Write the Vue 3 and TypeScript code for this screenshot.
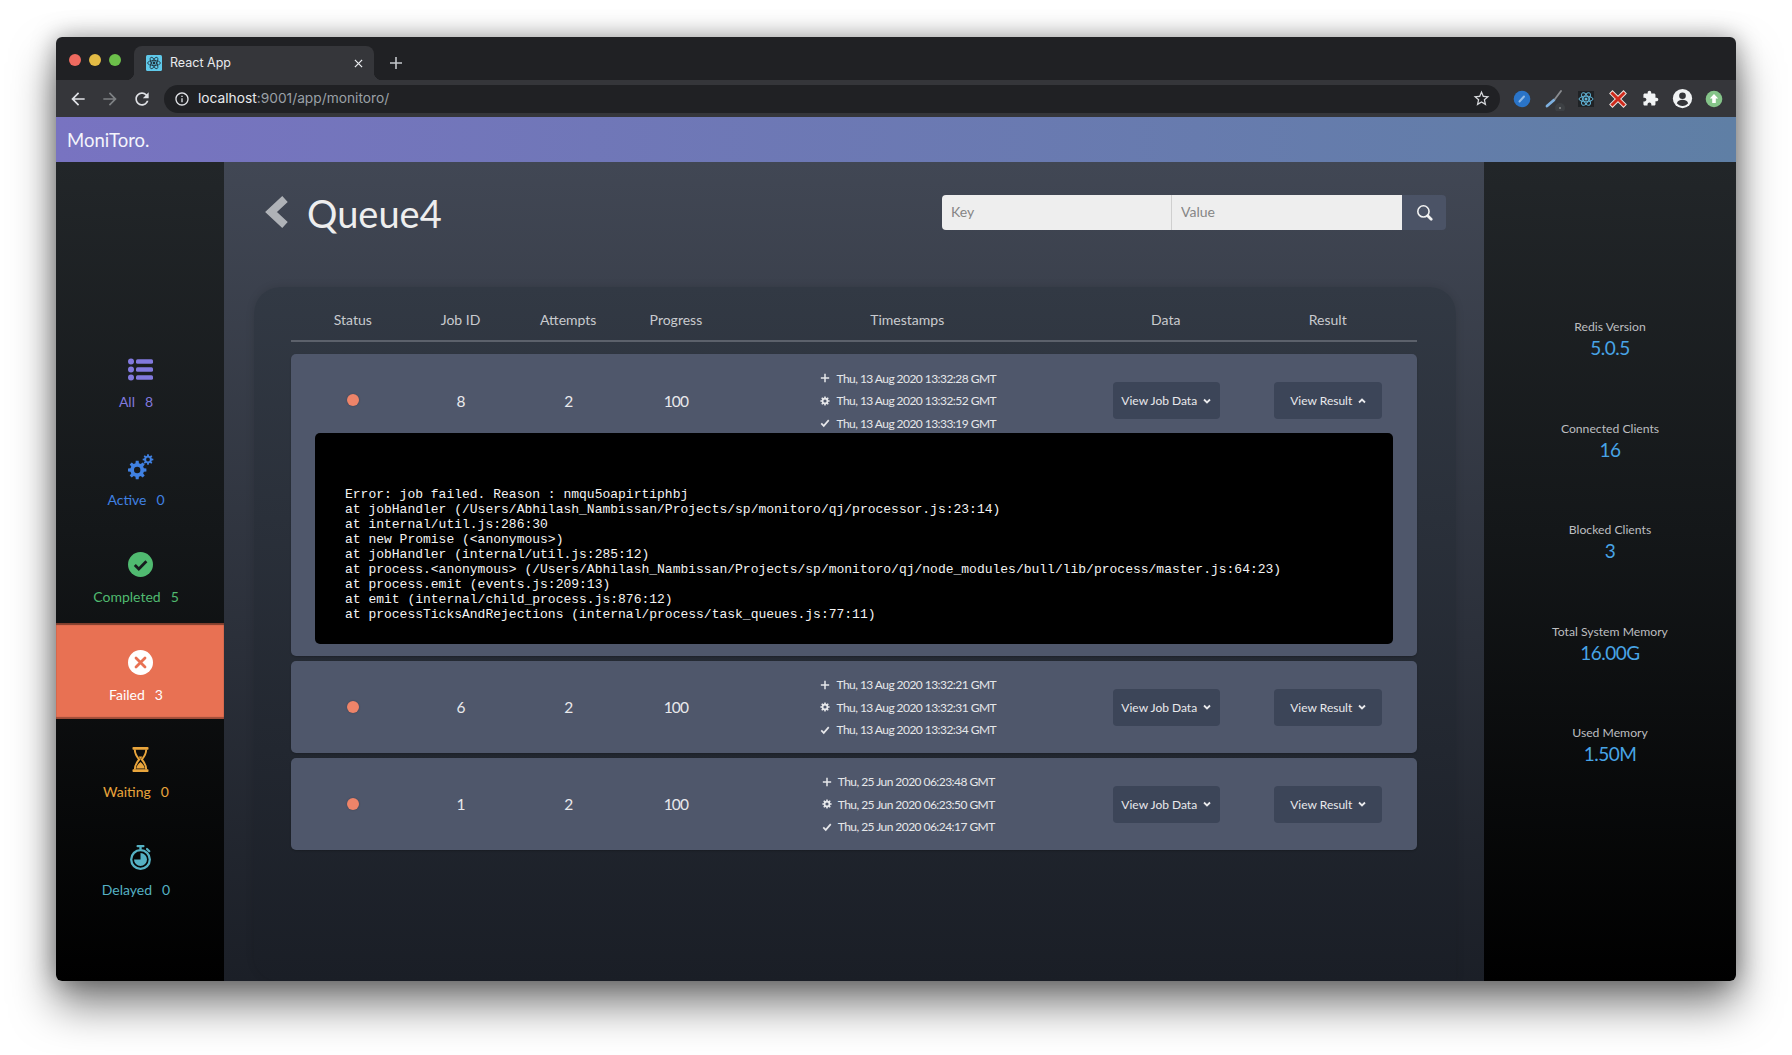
<script setup lang="ts">
interface NavItem { name: string; count: number; cls: string }
interface JobRow { id: number; stamps: string[]; open: boolean }

function gear(cx: number, cy: number, ro: number, ri: number, hole: number, n: number): string {
  const pts: string[] = []
  const step = (Math.PI * 2) / n
  for (let i = 0; i < n; i++) {
    const a = i * step
    const list: [number, number][] = [
      [ri, a - step * 0.32],
      [ro, a - step * 0.2],
      [ro, a + step * 0.2],
      [ri, a + step * 0.32],
    ]
    for (const [r, t] of list) {
      pts.push(`${(cx + r * Math.cos(t)).toFixed(2)} ${(cy + r * Math.sin(t)).toFixed(2)}`)
    }
  }
  const h = `M${cx - hole} ${cy}a${hole} ${hole} 0 1 0 ${hole * 2} 0a${hole} ${hole} 0 1 0 ${-hole * 2} 0z`
  return `M${pts.join('L')}z${h}`
}

const bigGear = gear(9.2, 15, 9.3, 6.9, 3.2, 8)
const smallGear = gear(20, 4.5, 5.4, 3.9, 1.9, 8)
const tinyGear = gear(6, 6, 5.6, 4.1, 1.9, 8)

const nav: NavItem[] = [
  { name: 'All', count: 8, cls: 'all' },
  { name: 'Active', count: 0, cls: 'active' },
  { name: 'Completed', count: 5, cls: 'completed' },
  { name: 'Failed', count: 3, cls: 'failed' },
  { name: 'Waiting', count: 0, cls: 'waiting' },
  { name: 'Delayed', count: 0, cls: 'delayed' },
]

const columns = ['Status', 'Job ID', 'Attempts', 'Progress', 'Timestamps', 'Data', 'Result']

const rows: JobRow[] = [
  { id: 8, open: true, stamps: ['Thu, 13 Aug 2020 13:32:28 GMT', 'Thu, 13 Aug 2020 13:32:52 GMT', 'Thu, 13 Aug 2020 13:33:19 GMT'] },
  { id: 6, open: false, stamps: ['Thu, 13 Aug 2020 13:32:21 GMT', 'Thu, 13 Aug 2020 13:32:31 GMT', 'Thu, 13 Aug 2020 13:32:34 GMT'] },
  { id: 1, open: false, stamps: ['Thu, 25 Jun 2020 06:23:48 GMT', 'Thu, 25 Jun 2020 06:23:50 GMT', 'Thu, 25 Jun 2020 06:24:17 GMT'] },
]

const trace = `Error: job failed. Reason : nmqu5oapirtiphbj
at jobHandler (/Users/Abhilash_Nambissan/Projects/sp/monitoro/qj/processor.js:23:14)
at internal/util.js:286:30
at new Promise (<anonymous>)
at jobHandler (internal/util.js:285:12)
at process.<anonymous> (/Users/Abhilash_Nambissan/Projects/sp/monitoro/qj/node_modules/bull/lib/process/master.js:64:23)
at process.emit (events.js:209:13)
at emit (internal/child_process.js:876:12)
at processTicksAndRejections (internal/process/task_queues.js:77:11)`

const stats = [
  { label: 'Redis Version', value: '5.0.5' },
  { label: 'Connected Clients', value: '16' },
  { label: 'Blocked Clients', value: '3' },
  { label: 'Total System Memory', value: '16.00G' },
  { label: 'Used Memory', value: '1.50M' },
]
</script>

<template>
  <div class="page">
    <div class="window">
      <div class="tabbar">
        <div class="lights">
          <span class="light red"></span>
          <span class="light yellow"></span>
          <span class="light green"></span>
        </div>
        <div class="tab">
          <svg class="favicon" viewBox="0 0 16 16">
            <rect width="16" height="16" rx="1.5" fill="#5fc9ea" />
            <g fill="none" stroke="#20303a" stroke-width="0.8">
              <ellipse cx="8" cy="8" rx="6.4" ry="2.5" />
              <ellipse cx="8" cy="8" rx="6.4" ry="2.5" transform="rotate(60 8 8)" />
              <ellipse cx="8" cy="8" rx="6.4" ry="2.5" transform="rotate(120 8 8)" />
            </g>
            <circle cx="8" cy="8" r="1.4" fill="#20303a" />
          </svg>
          <span class="tab-title">React App</span>
          <svg class="tab-close" viewBox="0 0 10 10">
            <path d="M1 1l8 8M9 1l-8 8" stroke="#e8eaed" stroke-width="1.4" fill="none" />
          </svg>
        </div>
        <svg class="new-tab" viewBox="0 0 14 14">
          <path d="M7 1v12M1 7h12" stroke="#c4c7cb" stroke-width="1.6" fill="none" />
        </svg>
      </div>

      <div class="toolbar">
        <span class="tool"><svg viewBox="0 0 24 24" fill="#dfe1e5"><path d="M20 11H7.83l5.59-5.59L12 4l-8 8 8 8 1.41-1.41L7.83 13H20v-2z" /></svg></span>
        <span class="tool"><svg viewBox="0 0 24 24" fill="#7d8083"><path d="M12 4l-1.41 1.41L16.17 11H4v2h12.17l-5.58 5.59L12 20l8-8z" /></svg></span>
        <span class="tool"><svg viewBox="0 0 24 24" fill="#dfe1e5"><path d="M17.65 6.35C16.2 4.9 14.21 4 12 4c-4.42 0-7.99 3.58-7.99 8s3.57 8 7.99 8c3.73 0 6.84-2.55 7.73-6h-2.08c-.82 2.33-3.04 4-5.65 4-3.31 0-6-2.69-6-6s2.69-6 6-6c1.66 0 3.14.69 4.22 1.78L13 11h7V4l-2.35 2.35z" /></svg></span>
        <div class="omnibox">
          <svg class="info" viewBox="0 0 24 24" fill="#e0e2e6"><path d="M11 7h2v2h-2zm0 4h2v6h-2zm1-9C6.48 2 2 6.48 2 12s4.48 10 10 10 10-4.48 10-10S17.52 2 12 2zm0 18c-4.41 0-8-3.59-8-8s3.59-8 8-8 8 3.59 8 8-3.59 8-8 8z" /></svg>
          <span class="url"><span class="host">localhost</span>:9001/app/monitoro/</span>
          <svg class="star" viewBox="0 0 24 24" fill="#d5d7da"><path d="M22 9.24l-7.19-.62L12 2 9.19 8.63 2 9.24l5.46 4.73L5.82 21 12 17.27 18.18 21l-1.63-7.03L22 9.24zM12 15.4l-3.76 2.27 1-4.28-3.32-2.88 4.38-.38L12 6.1l1.71 4.01 4.38.38-3.32 2.88 1 4.28L12 15.4z" /></svg>
        </div>
        <div class="exts">
          <span class="tool">
            <svg viewBox="0 0 24 24" class="ext">
              <circle cx="12" cy="12" r="8.3" fill="#2a74c8" />
              <path d="M9.500 14.500l4.500-5" stroke="#8fb9e6" stroke-width="2" stroke-linecap="round" />
            </svg>
          </span>
          <span class="tool">
            <svg viewBox="0 0 24 24" class="ext">
              <path d="M5 19l7-6" stroke="#7db0e0" stroke-width="2.800" stroke-linecap="round" />
              <path d="M13 12l6-8" stroke="#8a8c90" stroke-width="1.800" stroke-linecap="round" />
              <circle cx="18" cy="21" r="5" fill="#3d4044" />
              <circle cx="18" cy="21" r="0.700" fill="#e0e0e0" />
            </svg>
          </span>
          <span class="tool">
            <svg viewBox="0 0 24 24" class="ext">
              <rect x="4" y="4" width="16" height="16" fill="#1f2225" />
              <g fill="none" stroke="#62b4d6" stroke-width="1">
                <ellipse cx="12" cy="12" rx="7" ry="2.800" />
                <ellipse cx="12" cy="12" rx="7" ry="2.800" transform="rotate(60 12 12)" />
                <ellipse cx="12" cy="12" rx="7" ry="2.800" transform="rotate(120 12 12)" />
              </g>
              <circle cx="12" cy="12" r="1.500" fill="#62b4d6" />
            </svg>
          </span>
          <span class="tool">
            <svg viewBox="0 0 24 24" class="ext">
              <path d="M6.500 6.500l11 11M17.500 6.500l-11 11" stroke="#f0e6e2" stroke-width="4.800" stroke-linecap="square" />
              <path d="M6.500 6.500l11 11M17.500 6.500l-11 11" stroke="#cf2a1c" stroke-width="3" stroke-linecap="square" />
            </svg>
          </span>
          <span class="tool">
            <svg viewBox="0 0 24 24" class="puzzle" fill="#f1f3f4"><path d="M20.500 11H19V7c0-1.100-.9-2-2-2h-4V3.500C13 2.120 11.880 1 10.500 1S8 2.120 8 3.500V5H4c-1.100 0-1.990.9-1.990 2v3.800H3.500c1.490 0 2.700 1.210 2.700 2.700s-1.210 2.700-2.700 2.700H2V20c0 1.100.9 2 2 2h3.800v-1.500c0-1.490 1.210-2.700 2.700-2.700 1.490 0 2.700 1.210 2.700 2.700V22H17c1.100 0 2-.9 2-2v-4h1.500c1.380 0 2.500-1.120 2.500-2.500S21.880 11 20.500 11z" /></svg>
          </span>
          <span class="tool">
            <svg viewBox="0 0 24 24" class="avatar">
              <circle cx="12" cy="12" r="11" fill="#f1f3f4" />
              <circle cx="12" cy="8.800" r="3.800" fill="#35363a" />
              <path d="M5.500 17.500c1-3 4-4 6.500-4s5.500 1 6.500 4c-1.500 1.900-3.800 3-6.500 3s-5-1.100-6.500-3z" fill="#35363a" />
            </svg>
          </span>
          <span class="tool">
            <svg viewBox="0 0 24 24" class="ext">
              <circle cx="12" cy="12" r="8.300" fill="#85c489" />
              <path d="M12 7l4.200 4.500h-2.400V16h-3.600v-4.500H7.800z" fill="#fff" />
            </svg>
          </span>
        </div>
      </div>

      <header class="brandbar">MoniToro.</header>

      <div class="app">
        <nav class="sidebar">
          <div v-for="item in nav" :key="item.name" class="nav-item" :class="item.cls">
            <svg v-if="item.cls === 'all'" class="nav-icon" viewBox="0 0 25 25">
              <circle cx="3" cy="4.500" r="3" />
              <circle cx="3" cy="12.500" r="3" />
              <circle cx="3" cy="20.500" r="3" />
              <rect x="8" y="2.300" width="17" height="4.400" rx="1.500" />
              <rect x="8" y="10.300" width="17" height="4.400" rx="1.500" />
              <rect x="8" y="18.300" width="17" height="4.400" rx="1.500" />
            </svg>
            <svg v-else-if="item.cls === 'active'" class="nav-icon" viewBox="0 0 25 25" fill-rule="evenodd">
              <path :d="bigGear" />
              <path :d="smallGear" />
            </svg>
            <svg v-else-if="item.cls === 'completed'" class="nav-icon" viewBox="0 0 25 25">
              <circle cx="12.500" cy="12.500" r="12.500" />
              <path d="M6.800 13l4 4 7.600-7.800" fill="none" stroke="#171b1e" stroke-width="2.800" />
            </svg>
            <svg v-else-if="item.cls === 'failed'" class="nav-icon" viewBox="0 0 25 25">
              <circle cx="12.500" cy="12.500" r="12.500" fill="#fff" />
              <path d="M8 8l9 9M17 8l-9 9" fill="none" stroke="#e87153" stroke-width="2.800" stroke-linecap="round" />
            </svg>
            <svg v-else-if="item.cls === 'waiting'" class="nav-icon" viewBox="0 0 25 25">
              <rect x="4.500" y="0" width="16" height="2.800" rx="0.800" />
              <rect x="4.500" y="22.200" width="16" height="2.800" rx="0.800" />
              <path d="M6.800 2.500c0 5 2.200 7.500 4.400 10-2.200 2.500-4.400 5-4.400 10M18.200 2.500c0 5-2.200 7.500-4.400 10 2.200 2.500 4.400 5 4.400 10" fill="none" stroke="currentColor" stroke-width="1.900" />
              <path d="M10.500 9.500h4L12.500 12zM8.200 21.500c.3-3 2.500-5 4.300-6.500 1.800 1.500 4 3.500 4.300 6.500z" />
            </svg>
            <svg v-else class="nav-icon" viewBox="0 0 25 25">
              <rect x="8.500" y="0" width="8" height="2.200" rx="1" />
              <rect x="11.300" y="1.500" width="2.400" height="3" />
              <path d="M19 4l2.300 2.200" stroke="currentColor" stroke-width="2.200" stroke-linecap="round" />
              <circle cx="12.500" cy="14.500" r="9.300" fill="none" stroke="currentColor" stroke-width="2.300" />
              <path d="M12.500 14.500V8a6.500 6.500 0 1 1-6.500 6.500z" />
            </svg>
            <div class="nav-label"><span>{{ item.name }}</span><span>{{ item.count }}</span></div>
          </div>
        </nav>

        <main class="main">
          <div class="titlebar">
            <div class="title-wrap">
              <svg class="back" viewBox="0 0 24 32">
                <path d="M20 3L6 16l14 13" fill="none" stroke="#afb2b7" stroke-width="8" />
              </svg>
              <h1 class="title">Queue4</h1>
            </div>
            <div class="search">
              <input class="field" placeholder="Key" />
              <input class="field" placeholder="Value" />
              <button class="search-btn" aria-label="Search">
                <svg viewBox="0 0 16 16">
                  <circle cx="7" cy="7" r="5.300" fill="none" stroke="#f2f2f2" stroke-width="1.500" />
                  <path d="M11 11l3.300 3.300" stroke="#f2f2f2" stroke-width="2.600" stroke-linecap="round" />
                </svg>
              </button>
            </div>
          </div>

          <section class="card">
            <div class="grid head">
              <div v-for="c in columns" :key="c" class="cell">{{ c }}</div>
            </div>
            <div class="rows">
              <article v-for="r in rows" :key="r.id" class="row" :class="{ open: r.open }">
                <div class="grid body">
                  <div class="cell"><span class="dot"></span></div>
                  <div class="cell num">{{ r.id }}</div>
                  <div class="cell num">2</div>
                  <div class="cell num">100</div>
                  <div class="cell stamps">
                    <div class="stamp">
                      <svg class="stamp-icon" viewBox="0 0 12 12"><path d="M6 1v10M1 6h10" stroke="currentColor" stroke-width="1.800" fill="none" /></svg>
                      <span>{{ r.stamps[0] }}</span>
                    </div>
                    <div class="stamp">
                      <svg class="stamp-icon" viewBox="0 0 12 12" fill-rule="evenodd"><path :d="tinyGear" fill="currentColor" /></svg>
                      <span>{{ r.stamps[1] }}</span>
                    </div>
                    <div class="stamp">
                      <svg class="stamp-icon" viewBox="0 0 12 12"><path d="M1.500 6.500l3 3L10.500 2.500" stroke="currentColor" stroke-width="2" fill="none" /></svg>
                      <span>{{ r.stamps[2] }}</span>
                    </div>
                  </div>
                  <div class="cell">
                    <button class="view-btn">View Job Data
                      <svg class="caret" viewBox="0 0 8 6"><path d="M1 1.500l3 3 3-3" stroke="currentColor" stroke-width="1.800" fill="none" /></svg>
                    </button>
                  </div>
                  <div class="cell">
                    <button class="view-btn result">View Result
                      <svg class="caret" viewBox="0 0 8 6"><path :d="r.open ? 'M1 4.500l3-3 3 3' : 'M1 1.500l3 3 3-3'" stroke="currentColor" stroke-width="1.800" fill="none" /></svg>
                    </button>
                  </div>
                </div>
                <pre v-if="r.open" class="trace">{{ trace }}</pre>
              </article>
            </div>
          </section>
        </main>

        <aside class="stats">
          <div v-for="s in stats" :key="s.label" class="stat">
            <div class="stat-label">{{ s.label }}</div>
            <div class="stat-value">{{ s.value }}</div>
          </div>
        </aside>
      </div>
    </div>
  </div>
</template>

<style>
html, body {
  margin: 0;
  height: 100%;
  background: #fff;
  overflow: hidden;
}
</style>

<style scoped>
* { box-sizing: border-box; }

.page {
  width: 1792px;
  height: 1055px;
  padding: 37px 56px 0;
  font-family: Lato, "Noto Sans", sans-serif;
  background: #fff;
  overflow: hidden;
}

.window {
  width: 1680px;
  height: 944px;
  display: flex;
  flex-direction: column;
  border-radius: 6px;
  overflow: hidden;
  box-shadow: 0 24px 44px rgba(0, 0, 0, 0.5), 0 0 24px rgba(0, 0, 0, 0.35);
}

.tabbar {
  height: 43px;
  background: #202124;
  display: flex;
  align-items: flex-end;
  flex: none;
}
.lights {
  display: flex;
  gap: 8px;
  padding: 0 0 14px 13px;
  width: 78px;
}
.light { width: 12px; height: 12px; border-radius: 50%; }
.red { background: #ee6a5f; }
.yellow { background: #e3bb45; }
.green { background: #6cc04a; }

.tab {
  position: relative;
  width: 240px;
  height: 34px;
  background: #35363a;
  border-radius: 8px 8px 0 0;
  display: flex;
  align-items: center;
  padding: 0 11px 0 12px;
}
.tab::before, .tab::after {
  content: "";
  position: absolute;
  bottom: 0;
  width: 8px;
  height: 8px;
}
.tab::before {
  left: -8px;
  background: radial-gradient(circle at 0 0, #202124 8px, #35363a 8.5px);
}
.tab::after {
  right: -8px;
  background: radial-gradient(circle at 100% 0, #202124 8px, #35363a 8.5px);
}
.favicon { width: 16px; height: 16px; flex: none; }
.tab-title {
  margin-left: 8px;
  padding-bottom: 2px;
  font: 12.5px Inter, "Liberation Sans", sans-serif;
  color: #e8eaed;
  flex: 1;
}
.tab-close { width: 9px; height: 9px; }
.new-tab { width: 14px; height: 14px; margin: 0 0 10px 15px; }

.toolbar {
  height: 37px;
  background: #35363a;
  display: flex;
  align-items: center;
  padding: 0 6px;
  flex: none;
}
.tool {
  width: 32px;
  height: 28px;
  display: flex;
  align-items: center;
  justify-content: center;
  flex: none;
}
.tool svg { width: 20px; height: 20px; }
.tool svg.ext { width: 24px; height: 24px; overflow: hidden; }
.tool svg.puzzle { width: 17px; height: 17px; }
.tool svg.avatar { width: 21px; height: 21px; }
.omnibox {
  flex: 1;
  height: 28px;
  margin: 0 6px;
  background: #202124;
  border-radius: 14px;
  display: flex;
  align-items: center;
  padding: 0 9px 0 10px;
}
.info { width: 16px; height: 16px; flex: none; }
.url {
  margin-left: 8px;
  padding-bottom: 2px;
  flex: 1;
  font: 13.75px Inter, "Liberation Sans", sans-serif;
  color: #9aa0a6;
}
.host { color: #e8eaed; }
.star { width: 19px; height: 19px; }
.exts { display: flex; }

.brandbar {
  height: 45px;
  flex: none;
  padding-left: 11px;
  display: flex;
  align-items: center;
  font-size: 18.5px;
  color: #f4f4fb;
  background: linear-gradient(90deg, #7873c1, #5f7fa5);
}

.app {
  flex: 1;
  min-height: 0;
  display: flex;
}

.sidebar {
  width: 168px;
  flex: none;
  padding-top: 168px;
  background: linear-gradient(180deg, #222629 0%, #141719 45%, #000 100%);
  display: flex;
  flex-direction: column;
}
.nav-item {
  height: 97.5px;
  display: flex;
  flex-direction: column;
  align-items: center;
  padding-top: 27px;
  font-size: 14px;
}
.nav-icon { width: 25px; height: 25px; fill: currentColor; display: block; overflow: visible; }
.nav-label {
  display: flex;
  gap: 10px;
  margin-top: 11px;
  padding-right: 8px;
  line-height: 17px;
}
.all { color: #8279de; }
.active { color: #4081e2; }
.completed { color: #50ba70; }
.nav-item.failed {
  color: #fff;
  height: 96px;
  margin-bottom: 1.5px;
  background: #e87153;
  box-shadow: inset 0 2px 1px rgba(0, 0, 0, 0.45), inset 0 -2px 1px rgba(0, 0, 0, 0.32);
}
.waiting { color: #e9a53c; }
.delayed { color: #55b1c3; }

.main {
  width: 1260px;
  flex: none;
  display: flex;
  flex-direction: column;
  background: linear-gradient(180deg, #414754 0%, #1b1f27 100%);
}
.titlebar {
  height: 125px;
  flex: none;
  display: flex;
  align-items: flex-start;
  justify-content: space-between;
  padding: 33px 38px 0 41px;
}
.title-wrap {
  display: flex;
  align-items: center;
  height: 38px;
}
.back { width: 24px; height: 32px; margin-right: 18px; margin-top: -4px; }
.title {
  margin: -2px 0 0;
  font-size: 38px;
  font-weight: 400;
  color: #eeeeee;
  line-height: 38px;
}
.search {
  display: flex;
  height: 35px;
  width: 504px;
  border-radius: 4px;
  overflow: hidden;
}
.field {
  width: 230px;
  height: 35px;
  border: 0;
  border-right: 1px solid #cfcfcf;
  background: #eeeeee;
  padding: 0 9px 2px;
  font: 14px Lato, sans-serif;
  outline: none;
}
.field:nth-child(2) { border-right: 0; }
.field::placeholder { color: #858585; opacity: 1; }
.search-btn {
  width: 44px;
  border: 0;
  background: #4b5366;
  display: flex;
  align-items: center;
  justify-content: center;
  padding: 0;
}
.search-btn svg { width: 17px; height: 17px; }

.card {
  flex: 1;
  min-height: 0;
  margin-left: 30px;
  width: 1202px;
  padding: 0 39px 0 37px;
  border-radius: 26px 26px 0 26px;
  background: linear-gradient(180deg, #323944 0%, #1a1e26 100%);
  box-shadow: 0 0 8px rgba(0, 0, 0, 0.12);
}
.grid {
  display: grid;
  grid-template-columns: 107.7px 107.7px 107.7px 107.7px 355px 162px 162px;
  padding: 0 8px;
}
.cell {
  display: flex;
  align-items: center;
  justify-content: center;
  min-width: 0;
}
.head {
  height: 55px;
  padding-top: 11px;
  border-bottom: 2px solid #5c616b;
  font-size: 14px;
  color: #c9cbcf;
}
.rows {
  display: flex;
  flex-direction: column;
  gap: 5px;
  margin-top: 12px;
}
.row {
  background: #4f576b;
  border-radius: 5px;
  box-shadow: 0 1px 2px rgba(0, 0, 0, 0.2);
}
.row.open { padding-bottom: 11.5px; }
.body { height: 92px; padding-top: 1px; }
.dot {
  width: 12px;
  height: 12px;
  border-radius: 50%;
  background: #ee8469;
  box-shadow: 0 0 2px rgba(0, 0, 0, 0.25);
  margin-top: -1px;
}
.num { font-size: 15.5px; color: #e9e9ec; letter-spacing: -0.9px; }
.stamps {
  flex-direction: column;
  gap: 0;
  padding-left: 2px;
}
.stamp {
  display: flex;
  align-items: center;
  justify-content: center;
  gap: 6px;
  height: 22.5px;
  font-size: 12px;
  letter-spacing: -0.55px;
  color: #e6e7ea;
}
.stamp-icon { width: 10px; height: 10px; flex: none; }
.view-btn {
  width: 107px;
  height: 37px;
  margin-left: 1px;
  border: 0;
  border-radius: 4px;
  background: #3c4558;
  color: #e9e9ec;
  font: 12px Lato, sans-serif;
  display: flex;
  align-items: center;
  justify-content: center;
  gap: 6px;
  padding: 0;
}
.view-btn.result { width: 108px; }
.caret { width: 8px; height: 6px; }
.trace {
  margin: -13px 24px 0;
  height: 211px;
  padding: 54px 26px 0 30px;
  background: #000;
  border-radius: 5px;
  font: 13px/15px "Liberation Mono", monospace;
  color: #f4f4f4;
  white-space: pre;
  overflow: hidden;
}

.stats {
  flex: 1;
  padding-top: 156px;
  display: flex;
  flex-direction: column;
  background: linear-gradient(180deg, #222629 0%, #141719 45%, #000 100%);
}
.stat {
  height: 101.5px;
  text-align: center;
}
.stat-label {
  font-size: 12.2px;
  color: #bdbec0;
  line-height: 18px;
}
.stat-value {
  font-size: 19px;
  letter-spacing: -0.5px;
  color: #48a4e6;
  line-height: 24px;
}
</style>
